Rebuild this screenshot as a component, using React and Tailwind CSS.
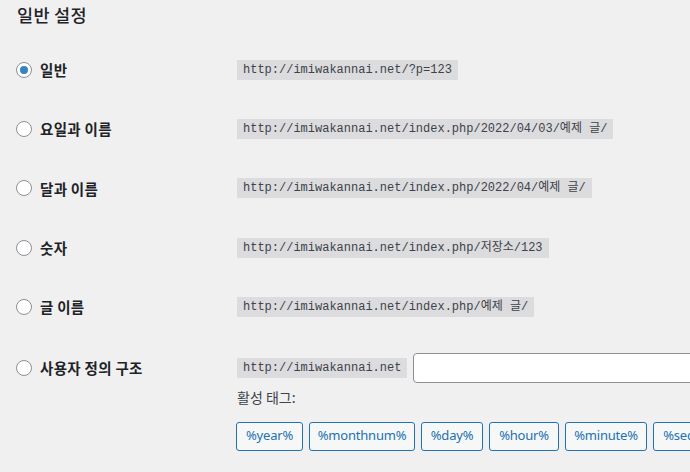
import React from "react";

const rows = [
  { label: "일반", code: "http://imiwakannai.net/?p=123", checked: true },
  { label: "요일과 이름", code: "http://imiwakannai.net/index.php/2022/04/03/예제 글/" },
  { label: "달과 이름", code: "http://imiwakannai.net/index.php/2022/04/예제 글/" },
  { label: "숫자", code: "http://imiwakannai.net/index.php/저장소/123" },
  { label: "글 이름", code: "http://imiwakannai.net/index.php/예제 글/" },
];

const tags = [
  { t: "%year%", w: "w-[67px]" },
  { t: "%monthnum%", w: "w-[106px]" },
  { t: "%day%", w: "w-[62px]" },
  { t: "%hour%", w: "w-[70px]" },
  { t: "%minute%", w: "w-[82px]" },
  { t: "%second%", w: "w-[84px]" },
  { t: "%post_id%", w: "w-[84px]" },
  { t: "%postname%", w: "w-[104px]" },
  { t: "%category%", w: "w-[98px]" },
  { t: "%author%", w: "w-[82px]" },
];

function Radio({ checked }) {
  return (
    <span className="flex h-4 w-4 shrink-0 items-center justify-center rounded-full border border-[#8c8f94] bg-white">
      {checked && <span className="h-2 w-2 rounded-full bg-[#3582c4]" />}
    </span>
  );
}

function Code({ children }) {
  return (
    <code className="inline-block bg-[#dcdcde] px-[6px] py-[2px] text-[12px] leading-[16px] text-[#3c434a] whitespace-pre [font-family:'Liberation_Mono','Noto_Sans_CJK_KR',monospace]">
      {children}
    </code>
  );
}

export default function App() {
  return (
    <div className="w-[690px] h-[472px] overflow-hidden bg-[#f0f0f1] text-[#1d2327] [font-family:'Noto_Sans','Noto_Sans_CJK_KR',sans-serif]">
      <div className="h-[40px] pl-[17px] pt-[3px]">
        <h2 className="text-[17.5px] leading-[24px] font-medium tracking-[0.3px] text-[#1d2327] [font-family:'Noto_Sans_CJK_KR',sans-serif]">일반 설정</h2>
      </div>
      {rows.map((r) => (
        <div key={r.label} className="flex h-[59.4px] items-center">
          <div className="flex w-[237px] items-center gap-2 pl-[16px]">
            <Radio checked={r.checked} />
            <span className="text-[14.5px] font-semibold tracking-[0.3px] [font-family:'Noto_Sans_CJK_KR',sans-serif]">{r.label}</span>
          </div>
          <Code>{r.code}</Code>
        </div>
      ))}
      <div className="flex pt-[15.7px]">
        <div className="flex h-[30px] w-[237px] shrink-0 items-center gap-2 pl-[16px]">
          <Radio />
          <span className="text-[14.5px] font-semibold tracking-[0.3px] [font-family:'Noto_Sans_CJK_KR',sans-serif]">사용자 정의 구조</span>
        </div>
        <div className="flex flex-col">
          <div className="flex items-center gap-[6px]">
            <Code>http://imiwakannai.net</Code>
            <input className="h-[30px] w-[400px] shrink-0 rounded-[4px] border border-[#8c8f94] bg-white" />
          </div>
          <div className="mt-[2px] text-[14px] leading-[24px] text-[#3c434a] [font-family:'Noto_Sans_CJK_KR',sans-serif]">활성 태그:</div>
          <div className="mt-[13px] flex gap-[6px] -ml-[1px]">
            {tags.map((x) => (
              <button key={x.t} className={`h-[29px] shrink-0 rounded-[3px] border border-[#2271b1] bg-[#f6f7f7] text-center text-[13px] tracking-[-0.2px] text-[#2271b1] ${x.w}`}>
                {x.t}
              </button>
            ))}
          </div>
        </div>
      </div>
    </div>
  );
}
